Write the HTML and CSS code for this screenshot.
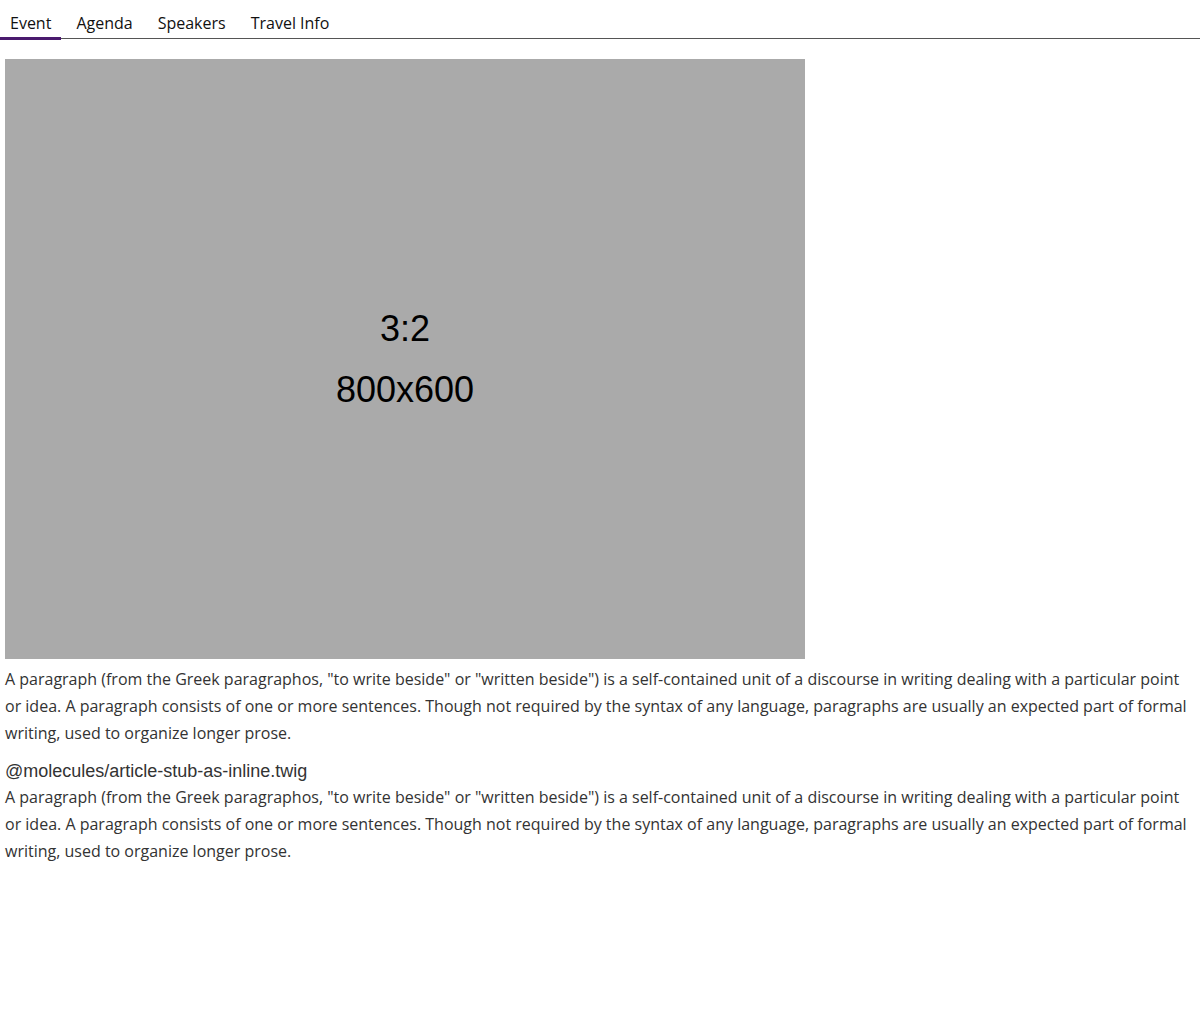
FILE: index.html
```html
<!DOCTYPE html>
<html>
<head>
<meta charset="utf-8">
<link rel="stylesheet" href="styles.css">
</head>
<body>
<nav class="tabs">
  <a class="tab active">Event</a>
  <a class="tab">Agenda</a>
  <a class="tab">Speakers</a>
  <a class="tab">Travel Info</a>
</nav>
<main class="content">
  <div class="placeholder">
    <div class="ratio">3:2</div>
    <div class="size">800x600</div>
  </div>
  <p class="para">A paragraph (from the Greek paragraphos, "to write beside" or "written beside") is a self-contained unit of a discourse in writing dealing with a particular point or idea. A paragraph consists of one or more sentences. Though not required by the syntax of any language, paragraphs are usually an expected part of formal writing, used to organize longer prose.</p>
  <div class="stub">@molecules/article-stub-as-inline.twig</div>
  <p class="para tight">A paragraph (from the Greek paragraphos, "to write beside" or "written beside") is a self-contained unit of a discourse in writing dealing with a particular point or idea. A paragraph consists of one or more sentences. Though not required by the syntax of any language, paragraphs are usually an expected part of formal writing, used to organize longer prose.</p>
</main>
</body>
</html>
```
FILE: styles.css
```css
html, body { margin: 0; padding: 0; background: #fff; }
body { font-family: "Open Sans", sans-serif; }
.tabs {
  display: flex;
  border-bottom: 1px solid #555;
  height: 39px;
  box-sizing: border-box;
  padding-top: 10px;
}
.tab {
  font-size: 16px;
  color: #111;
  padding: 0 10px;
  line-height: 26px;
  height: 30px;
  box-sizing: border-box;
  margin-right: 5px;
  flex: none;
}
.tab.active { border-bottom: 3px solid #4a1a6e; }
.content { padding: 20px 5px 0 5px; }
.placeholder {
  width: 800px;
  height: 600px;
  background: #aaa;
  display: flex;
  flex-direction: column;
  align-items: center;
  justify-content: center;
  font-family: "Liberation Sans", Arial, sans-serif;
  color: #000;
  gap: 16px;
}
.ratio, .size { font-size: 36px; line-height: 45px; }
.para {
  font-size: 16px;
  line-height: 27px;
  color: #333;
  margin: 7px 0 0 0;
}
.stub {
  font-family: "Liberation Sans", Arial, sans-serif;
  font-size: 18px;
  color: #333;
  margin-top: 13px;
  line-height: 23px;
}
.para.tight { margin-top: 1px; }
```
